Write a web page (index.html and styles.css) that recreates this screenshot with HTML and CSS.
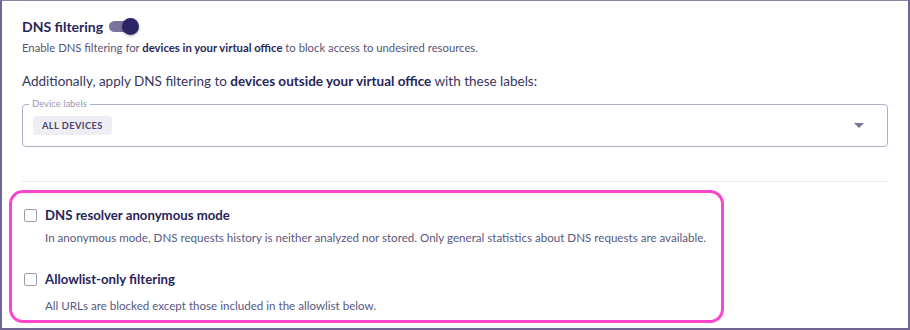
FILE: index.html
```html
<!DOCTYPE html>
<html>
<head>
<meta charset="utf-8">
<link rel="stylesheet" href="styles.css">
</head>
<body>
<div class="frame">
  <div class="content">
    <div class="title-row">
      <span class="title">DNS filtering</span>
      <span class="toggle"><span class="track"></span><span class="thumb"></span></span>
    </div>
    <p class="desc">Enable DNS filtering for <b>devices in your virtual office</b> to block access to undesired resources.</p>
    <p class="lead">Additionally, apply DNS filtering to <b>devices outside your virtual office</b> with these labels:</p>
    <fieldset class="select">
      <legend>Device labels</legend>
      <span class="chip">ALL DEVICES</span>
      <svg class="caret" width="10" height="5" viewBox="0 0 10 5"><path d="M0 0h10L5 5z" fill="#7a7399"/></svg>
    </fieldset>
    <hr class="divider">
  </div>
  <div class="options">
    <div class="highlight"></div>
    <label class="opt">
      <span class="box"></span>
      <span class="opt-title">DNS resolver anonymous mode</span>
    </label>
    <p class="opt-desc">In anonymous mode, DNS requests history is neither analyzed nor stored. Only general statistics about DNS requests are available.</p>
    <label class="opt opt2">
      <span class="box"></span>
      <span class="opt-title">Allowlist-only filtering</span>
    </label>
    <p class="opt-desc last">All URLs are blocked except those included in the allowlist below.</p>
  </div>
</div>
</body>
</html>
```
FILE: styles.css
```css
* { box-sizing: border-box; }
html, body { margin: 0; padding: 0; background: #fff; }
body { font-family: "Lato", "Noto Sans", sans-serif; color: #2a2858; }
.frame {
  width: 910px; height: 330px;
  border-left: 2px solid #6e6690;
  border-right: 2px solid #6e6690;
  border-top: 1px solid #8a83a8;
  border-bottom: 2px solid #6e6690;
  position: relative;
  overflow: hidden;
}
.content { padding: 0 20px 0 20px; }
.title-row { display: flex; align-items: center; gap: 6px; height: 20px; margin-top: 15px; }
.title { font-size: 14px; font-weight: 700; color: #28265a; }
.toggle { position: relative; width: 30px; height: 18px; display: inline-block; }
.track { position: absolute; left: 0; top: 4px; width: 26px; height: 11px; border-radius: 6px; background: #7a739e; }
.thumb { position: absolute; left: 13px; top: 1px; width: 17px; height: 17px; border-radius: 50%; background: #2b2566; box-shadow: 0 1px 3px rgba(0,0,0,0.3); }
.desc { margin: 5px 0 0; font-size: 11.3px; color: #565578; }
.desc b { color: #2a2858; }
.lead { margin: 19px 0 0; font-size: 13.5px; color: #37355f; }
.lead b { color: #28265a; }
.select {
  margin: 10px 0 0; padding: 0 10px; height: 48px;
  border: 1px solid #b2accb; border-radius: 4px;
  position: relative; display: flex; align-items: center;
  min-width: 0;
}
.select legend { font-size: 9.5px; color: #9c98b4; padding: 0 3px; margin-left: -4px; line-height: 10px; }
.chip { background: #eeedf3; border-radius: 4px; font-size: 9.3px; font-weight: 700; color: #48466e; letter-spacing: 0.4px; padding: 4px 9px; margin-top: -5px; }
.caret { margin-left: auto; margin-right: 13px; margin-top: -5px; }
.divider { border: 0; border-top: 1px solid #ebeaf0; margin: 34px 0 0; }
.options { position: relative; padding: 23px 0 0 22px; }
.highlight { position: absolute; left: 7px; top: 8px; width: 715px; height: 133px; border: 3px solid #ff44cc; border-radius: 14px; }
.opt { display: flex; align-items: center; gap: 8px; height: 20px; }
.box { width: 13px; height: 13px; border: 1.5px solid #9c99b2; border-radius: 2px; background: #fff; }
.opt-title { font-size: 13.2px; font-weight: 700; color: #28265a; }
.opt-desc { margin: 6px 0 0 21px; font-size: 11.6px; color: #5a5880; }
.opt2 { margin-top: 25px; }
.opt-desc.last { margin-top: 10px; }
```
